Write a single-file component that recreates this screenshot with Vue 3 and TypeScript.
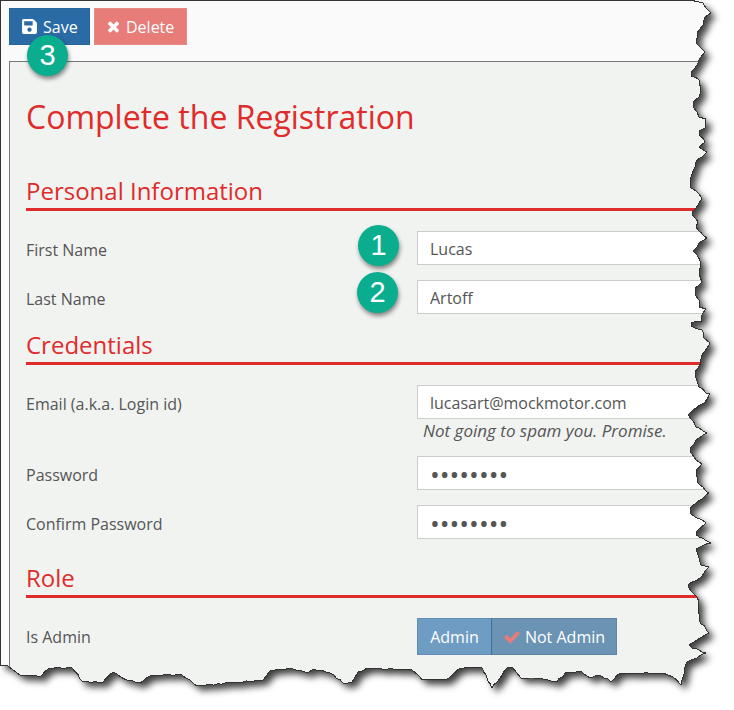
<script setup lang="ts">
import { computed } from 'vue'

// outline of the torn sheet, clockwise from the top left corner
const edge: [number, number][] = [
  [692, 0.5], [703, 3], [704, 5], [711, 13], [705, 17], [703, 25], [697, 33], [696, 43], [701, 48],
  [705, 52], [700, 58], [697, 65], [691, 72], [691, 76], [699, 80], [701, 88], [699, 97], [693, 102], [693, 107],
  [697, 112], [699, 117], [706, 119], [705, 128], [699, 131], [699, 135], [705, 142], [699, 147], [707, 152],
  [702, 157], [695, 163], [695, 167], [690, 182], [691, 188], [698, 193], [702, 198], [696, 208], [692, 212],
  [692, 215], [698, 222], [696, 227], [698, 230], [707, 238], [699, 243], [693, 251], [697, 255], [701, 263],
  [699, 273], [702, 282], [695, 288], [695, 295], [699, 300], [699, 307], [706, 309], [701, 317], [702, 321],
  [691, 323], [691, 326], [702, 330], [704, 338], [710, 343], [702, 355], [701, 363], [695, 372], [696, 378],
  [699, 387], [706, 393], [710, 393], [704, 403], [690, 413], [688, 415], [696, 427], [707, 433], [696, 440],
  [690, 448], [690, 452], [696, 460], [702, 464], [696, 470], [697, 482], [709, 493], [696, 503], [690, 508],
  [690, 513], [697, 518], [706, 523], [696, 532], [696, 535], [711, 543], [696, 549], [699, 558], [701, 565],
  [709, 567], [701, 577], [688, 585], [689, 588], [697, 597], [699, 605], [699, 620], [709, 633], [689, 645],
  [692, 648], [706, 653], [697, 658], [687, 662], [682, 680], [681, 685], [673, 677], [663, 673], [633, 673],
  [620, 673], [611, 682], [600, 675], [590, 678], [582, 672], [565, 673], [557, 682], [533, 678], [521, 678],
  [512, 667], [507, 668], [492, 688], [482, 668], [460, 668], [452, 675], [445, 680], [422, 680], [412, 670],
  [370, 668], [358, 672], [352, 682], [343, 683], [330, 673], [313, 669], [308, 673], [293, 669], [270, 671],
  [263, 680], [197, 686], [182, 675], [150, 676], [140, 683], [127, 680], [113, 672], [103, 682], [83, 682],
  [72, 668], [50, 668], [40, 677], [20, 675], [8, 666], [0.5, 665]
]

// break the long segments up a little so the tear is not too clean
function roughen(points: [number, number][]) {
  const out: string[] = ['0.5 0.5']
  let seed = 7
  points.forEach((p, i) => {
    if (i > 0) {
      const prev = points[i - 1]
      const steps = Math.floor(Math.hypot(p[0] - prev[0], p[1] - prev[1]) / 4)
      for (let s = 1; s < steps; s++) {
        seed = (seed * 31 + 11) % 101
        const x = prev[0] + ((p[0] - prev[0]) * s) / steps + ((seed % 3) - 1) * 0.6
        const y = prev[1] + ((p[1] - prev[1]) * s) / steps + (((seed % 5) % 3) - 1) * 0.6
        out.push(`${x} ${y}`)
      }
    }
    out.push(p.join(' '))
  })
  return out
}

const sheet = computed(() => 'M' + roughen(edge).join('L') + 'Z')
const outside = computed(() => 'M0 0H734V710H0Z' + sheet.value)
</script>

<template>
  <div class="page">
    <div class="toolbar">
      <button class="btn save">
        <svg class="ico" viewBox="0 0 448 512"><path d="M433.941 129.941l-83.882-83.882A48 48 0 0 0 316.118 32H48C21.49 32 0 53.49 0 80v352c0 26.51 21.49 48 48 48h352c26.51 0 48-21.490 48-48V163.882a48 48 0 0 0-14.059-33.941zM224 416c-35.346 0-64-28.654-64-64 0-35.346 28.654-64 64-64s64 28.654 64 64c0 35.346-28.654 64-64 64zm96-304.520V212c0 6.627-5.373 12-12 12H76c-6.627 0-12-5.373-12-12V108c0-6.627 5.373-12 12-12h228.520c3.183 0 6.235 1.264 8.485 3.515l3.480 3.480A11.996 11.996 0 0 1 320 111.480z" fill="currentColor" /></svg>
        Save
      </button>
      <button class="btn delete">
        <svg class="ico times" viewBox="0 0 1408 1792"><path d="M1298 1322q0 40-28 68l-136 136q-28 28-68 28t-68-28l-294-294-294 294q-28 28-68 28t-68-28l-136-136q-28-28-28-68t28-68l294-294-294-294q-28-28-28-68t28-68l136-136q28-28 68-28t68 28l294 294 294-294q28-28 68-28t68 28l136 136q28 28 28 68t-28 68l-294 294 294 294q28 28 28 68z" fill="currentColor" /></svg>
        Delete
      </button>
    </div>

    <div class="panel">
      <h1>Complete the Registration</h1>

      <h2 class="first">Personal Information</h2>
      <div class="row">
        <label>First Name</label>
        <input class="field" value="Lucas" />
      </div>
      <div class="row">
        <label>Last Name</label>
        <input class="field" value="Artoff" />
      </div>

      <h2 class="second">Credentials</h2>
      <div class="row">
        <label>Email (a.k.a. Login id)</label>
        <div>
          <input class="field" value="lucasart@mockmotor.com" />
          <p class="help">Not going to spam you. Promise.</p>
        </div>
      </div>
      <div class="row">
        <label>Password</label>
        <input class="field secret" type="password" value="12345678" />
      </div>
      <div class="row">
        <label>Confirm Password</label>
        <input class="field secret" type="password" value="12345678" />
      </div>

      <h2 class="third">Role</h2>
      <div class="row">
        <label>Is Admin</label>
        <div class="toggle">
          <button class="opt">Admin</button>
          <button class="opt active">
            <svg class="check" viewBox="0 0 1792 1792"><path d="M1671 566q0 40-28 68l-724 724-136 136q-28 28-68 28t-68-28l-136-136-362-362q-28-28-28-68t28-68l136-136q28-28 68-28t68 28l294 295 656-657q28-28 68-28t68 28l136 136q28 28 28 68z" fill="currentColor" /></svg>
            Not Admin
          </button>
        </div>
      </div>
    </div>

    <span class="badge b1">1</span>
    <span class="badge b2">2</span>
    <span class="badge b3">3</span>

    <svg class="torn" viewBox="0 0 734 710" width="734" height="710">
      <defs>
        <clipPath id="off-sheet"><path :d="outside" clip-rule="evenodd" /></clipPath>
        <filter id="soft" x="-5%" y="-5%" width="110%" height="110%"><feGaussianBlur stdDeviation="3.5" /></filter>
      </defs>
      <path :d="outside" fill="#fff" fill-rule="evenodd" />
      <g clip-path="url(#off-sheet)">
        <path :d="sheet" fill="#000" fill-opacity="0.75" filter="url(#soft)" transform="translate(5 5)" />
      </g>
      <path :d="sheet" fill="none" stroke="#333" stroke-width="1" shape-rendering="crispEdges" />
    </svg>
  </div>
</template>

<style scoped>
.page {
  position: relative;
  width: 734px;
  height: 710px;
  overflow: hidden;
  background: #fafafa;
  font-family: "Open Sans", "Liberation Sans", sans-serif;
  font-size: 16px;
  color: #555;
}

.toolbar {
  display: flex;
  gap: 4px;
  padding: 8px 0 0 9px;
  height: 61px;
  box-sizing: border-box;
}

.btn {
  display: flex;
  align-items: center;
  gap: 6px;
  height: 37px;
  padding: 0 12px;
  border: 1px solid transparent;
  color: #fff;
  font: inherit;
}

.save {
  background: #2a6aa5;
  border-color: #28639a;
  width: 81px;
}

.delete {
  background: #e87c78;
  border-color: #ea8a86;
  width: 93px;
}

.ico {
  width: 15px;
  height: 17px;
  flex: none;
}

.ico.times {
  width: 13px;
}

.panel {
  margin-left: 9px;
  height: 660px;
  box-sizing: border-box;
  padding: 37px 0 0 16px;
  border: 1px solid #777;
  border-right: none;
  background: #f1f3f1;
}

h1 {
  margin: 0;
  font-size: 32px;
  line-height: 36px;
  font-weight: 400;
  color: #e02b2b;
}

h2 {
  margin: 0 0 20px;
  height: 33px;
  box-sizing: border-box;
  border-bottom: 3px solid #e02b2b;
  font-size: 24px;
  line-height: 26px;
  font-weight: 400;
  color: #e02b2b;
}

h2.first {
  margin-top: 43px;
}

h2.second {
  margin-top: 18px;
}

h2.third {
  margin-top: 26px;
}

.row {
  display: grid;
  grid-template-columns: 391px 1fr;
  margin-bottom: 15px;
}

.row label {
  padding-top: 8px;
  line-height: 22px;
}

.field {
  display: block;
  width: 100%;
  height: 34px;
  box-sizing: border-box;
  padding: 1px 12px 0;
  border: 1px solid #ccc;
  border-radius: 0;
  background: #fff;
  color: #555;
  font: inherit;
  outline: none;
}

.secret {
  font-size: 26px;
}

.help {
  margin: 0;
  padding-left: 6px;
  height: 22px;
  font-size: 17px;
  line-height: 24px;
  font-style: italic;
}

.toggle {
  display: flex;
}

.opt {
  display: flex;
  align-items: center;
  justify-content: center;
  gap: 4px;
  width: 74px;
  height: 37px;
  padding: 0;
  border: 1px solid #5f8fb8;
  border-right: none;
  background: #6e9cc3;
  color: #fff;
  font: inherit;
  margin: 0;
}

.opt.active {
  width: 126px;
  background: #6b93b3;
  border: 1px solid #5f86a8;
  border-left-color: #3d6f99;
}

.check {
  width: 18px;
  height: 18px;
  color: #e87c78;
  flex: none;
}

.badge {
  position: absolute;
  width: 41px;
  height: 41px;
  border-radius: 50%;
  display: flex;
  align-items: center;
  justify-content: center;
  background: #0aae8f;
  color: #fff;
  font-family: "Liberation Sans", Arial, sans-serif;
  font-size: 29px;
  box-shadow: 1px 3px 4px rgba(0, 0, 0, 0.45);
}

.b1 {
  left: 358px;
  top: 225px;
}

.b2 {
  left: 357px;
  top: 272px;
}

.b3 {
  left: 27px;
  top: 35px;
}

.torn {
  position: absolute;
  left: 0;
  top: 0;
  pointer-events: none;
}
</style>

<style>
html,
body {
  margin: 0;
  background: #fff;
}
</style>
